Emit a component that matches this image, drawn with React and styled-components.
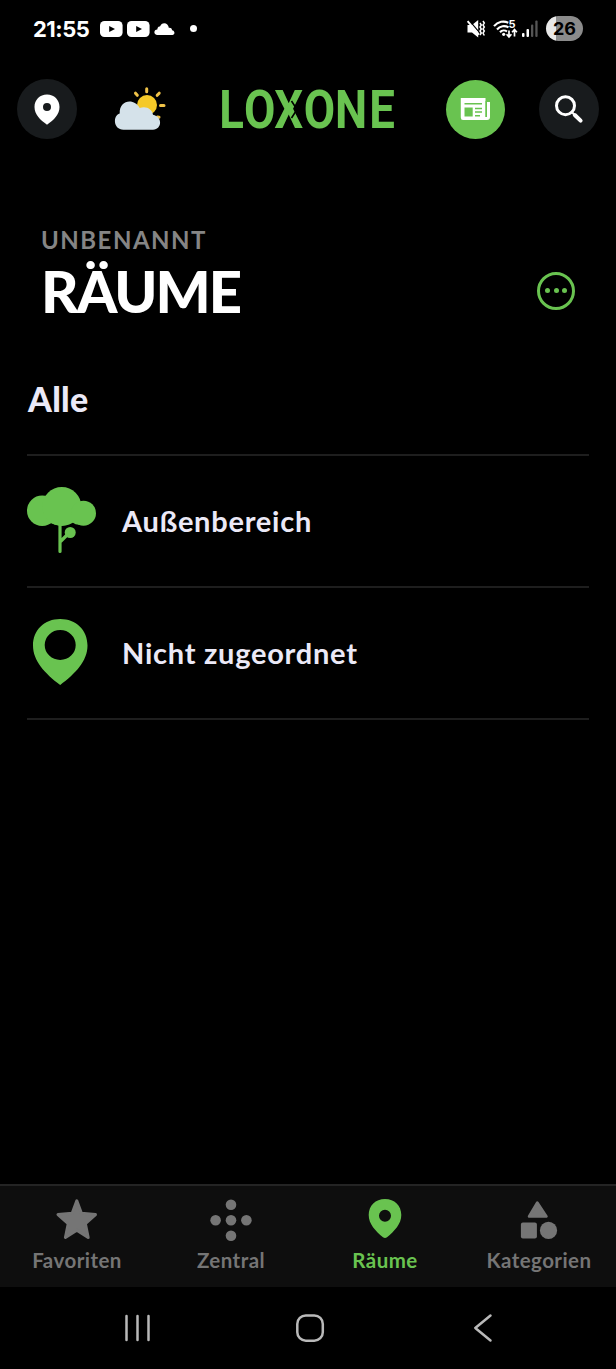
import styled, { createGlobalStyle } from 'styled-components';

const GREEN = '#69c350';
const GREY = '#757575';

function App() {
  return (
    <>
      <GlobalStyle />
      <Screen>
        <StatusBar />
        <Header />
        <PageHead>
          <Overline>UNBENANNT</Overline>
          <TitleRow>
            <Title>RÄUME</Title>
            <MoreButton aria-label="Mehr">
              <MoreDot />
              <MoreDot />
              <MoreDot />
            </MoreButton>
          </TitleRow>
        </PageHead>
        <Content>
          <SectionTitle>Alle</SectionTitle>
          <RoomList>
            <Room>
              <RoomIcon>
                <TreeIcon />
              </RoomIcon>
              <RoomName $spacing="0.75px">Außenbereich</RoomName>
            </Room>
            <Room>
              <RoomIcon>
                <RoomPinIcon />
              </RoomIcon>
              <RoomName $spacing="0.75px">Nicht zugeordnet</RoomName>
            </Room>
          </RoomList>
        </Content>
        <TabBar>
          <Tab>
            <StarIcon />
            <TabLabel>Favoriten</TabLabel>
          </Tab>
          <Tab>
            <DotsIcon />
            <TabLabel>Zentral</TabLabel>
          </Tab>
          <Tab $active>
            <TabPinIcon />
            <TabLabel>Räume</TabLabel>
          </Tab>
          <Tab>
            <ShapesIcon />
            <TabLabel>Kategorien</TabLabel>
          </Tab>
        </TabBar>
        <SystemNav />
      </Screen>
    </>
  );
}

function StatusBar() {
  return (
    <StatusWrapper>
      <Clock>21:55</Clock>
      <Notifications>
        <VideoIcon />
        <VideoIcon />
        <svg width="21" height="14" viewBox="0 0 21 14">
          <path
            d="M3.4 13C-.6 13-.6 7.600 3.300 7.600C3.400 4.600 5.500 4.500 6 4.600C7.500-.6 14.500.3 14.800 5.800C17.400 5.600 18 7 18 8.200C21.400 8.700 21 13 18.400 13Z"
            fill="#fff"
          />
        </svg>
        <NotificationDot />
      </Notifications>
      <Indicators>
        <MuteIcon />
        <WifiIcon />
        <SignalIcon />
        <Battery>26</Battery>
      </Indicators>
    </StatusWrapper>
  );
}

function VideoIcon() {
  return (
    <svg width="23" height="16" viewBox="0 0 23 16">
      <rect width="22.600" height="16" rx="4.500" fill="#fff" />
      <path d="M9.200 5L15 8L9.200 11Z" fill="#000" />
    </svg>
  );
}

function MuteIcon() {
  return (
    <svg width="20" height="20" viewBox="0 0 20 20">
      <path d="M1.500 6H6L12.200 1V18.500L6 13.500H1.500Z" fill="#fff" />
      <path d="M3.200 1.500L13.500 13.600" stroke="#000" strokeWidth="1.200" />
      <path d="M1.600 2.200L13 15.600" stroke="#fff" strokeWidth="1.900" />
      <path
        d="M14 4L15.300 6L14 8L15.300 10L14 12L15.300 14L14 16M17 2L18.300 4L17 6L18.300 8L17 10L18.300 12L17 14L18.300 16.500"
        stroke="#fff"
        strokeWidth="1.500"
        fill="none"
      />
    </svg>
  );
}

function WifiIcon() {
  return (
    <svg width="26" height="20" viewBox="0 0 26 20">
      <g fill="none" stroke="#fff" strokeWidth="2.100">
        <path d="M1 7.200C5 2.200 11 1.700 15.300 3.700" />
        <path d="M4 10.500C7 6.700 12 6.300 15.500 8.400" />
        <path d="M7 13.200C9 11 12 11 14 12.500" />
        <path d="M16 11.500V17.500M13.600 15.300L16 18L18.400 15.300" strokeWidth="1.700" />
        <path d="M21.500 17.500V11.500M19.100 13.200L21.500 10.500L23.900 13.200" strokeWidth="1.700" />
      </g>
      <circle cx="10.700" cy="15.300" r="1.600" fill="#fff" />
      <IconDigit x="15.600" y="9.400">
        5
      </IconDigit>
    </svg>
  );
}

function SignalIcon() {
  return (
    <svg width="17" height="18" viewBox="0 0 17 18">
      <rect x="0" y="13" width="2.500" height="4" rx="1" fill="#fff" />
      <rect x="4.500" y="9" width="2.500" height="8" rx="1" fill="#fff" />
      <rect x="9" y="4.500" width="2.300" height="12.500" rx="1" fill="#555" />
      <rect x="13.300" y="0.500" width="2.300" height="16.500" rx="1" fill="#555" />
    </svg>
  );
}

function Header() {
  return (
    <HeaderWrapper>
      <RoundButton $size={60} aria-label="Standort">
        <svg width="26" height="31" viewBox="0 0 26 31">
          <path
            fillRule="evenodd"
            d="M13 .5C20.200.5 25.500 5.900 25.500 12.900C25.500 20.500 20 25.500 13 30.700C6 25.500.5 20.500.5 12.900C.5 5.900 5.800.5 13 .5ZM13 9A4 4 0 1 0 13 17A4 4 0 1 0 13 9Z"
            fill="#fff"
          />
        </svg>
      </RoundButton>
      <WeatherIcon />
      <Logo />
      <RoundButton $size={59} $color={GREEN} aria-label="News">
        <NewsIcon />
      </RoundButton>
      <RoundButton $size={60} aria-label="Suche">
        <svg width="30" height="30" viewBox="0 0 30 30">
          <circle cx="11.500" cy="11.700" r="9" fill="none" stroke="#fff" strokeWidth="3" />
          <path d="M18 18.200L20 20.200" stroke="#fff" strokeWidth="2" />
          <path d="M20.800 21L26.600 26.600" stroke="#fff" strokeWidth="4" strokeLinecap="round" />
        </svg>
      </RoundButton>
    </HeaderWrapper>
  );
}

function WeatherIcon() {
  return (
    <svg width="52" height="46" viewBox="0 0 52 46">
      <circle cx="32" cy="19" r="10" fill="#f5c928" />
      <path
        d="M31.700 2.700V5.800M20.500 7.200L22.300 9.300M44.200 7.200L42.200 9.300M45.500 19.600H49M42.500 31L44 31.300"
        stroke="#efc248"
        strokeWidth="3"
        strokeLinecap="round"
      />
      <path
        d="M8.500 43.800C-2 43.500-2.300 29.300 4.700 27.500C4 13.500 19.500 11.700 24.700 22C31.500 19.500 37.300 23.500 38 28.700C47.500 30.500 47.500 43 38 43.800Z"
        fill="#d5e2ea"
      />
    </svg>
  );
}

function Logo() {
  return (
    <svg width="176" height="66" viewBox="0 -12 176 66" role="img" aria-label="Loxone">
      <g transform="scale(.86 1)">
        <LogoText x="-.8 27.800 63.200 97.500 133.800 173.500" y="40">
          LOXONE
        </LogoText>
      </g>
      <path d="M71.500 13L77 21.500L71.500 30" stroke="#000" strokeWidth="1.600" fill="none" />
    </svg>
  );
}

function NewsIcon() {
  return (
    <svg width="31" height="24" viewBox="0 0 31 24">
      <path d="M.8 1H25.500V20H27V5H30V20Q30 23 27 23H3Q.8 23 .8 20.500Z" fill="#fff" />
      <path
        d="M4.500 6.700H22M15 11.500H22M15 15H22M15 18.700H20"
        stroke={GREEN}
        strokeWidth="1.600"
      />
      <path d="M4.500 10.500H12.700V19.500H4.500Z" fill={GREEN} />
      <path d="M26.200 4V20" stroke={GREEN} strokeWidth="1.400" />
    </svg>
  );
}

function TreeIcon() {
  return (
    <svg width="69" height="66" viewBox="0 0 69 66">
      <g fill={GREEN}>
        <circle cx="15.200" cy="23.700" r="15.200" />
        <circle cx="34.800" cy="19.500" r="19.500" />
        <circle cx="56.500" cy="26.200" r="12.500" />
        <path d="M15 28H57V37Q50 39 45.500 35.500Q34 41 23.500 36Z" />
        <circle cx="43.200" cy="45.500" r="5.500" />
      </g>
      <path
        d="M33 35V64.500M33.500 54.500L42 46"
        stroke={GREEN}
        strokeWidth="3.200"
        strokeLinecap="round"
      />
    </svg>
  );
}

function RoomPinIcon() {
  return (
    <svg width="69" height="66" viewBox="0 0 69 66">
      <path
        fillRule="evenodd"
        d="M33.200 0C49 0 60.500 11 60.500 26.500C60.500 42 48.500 54.500 33.200 66C18 54.500 6 42 6 26.500C6 11 17.500 0 33.200 0ZM33.200 11A15.500 15 0 1 0 33.200 41A15.500 15 0 1 0 33.200 11Z"
        fill={GREEN}
      />
    </svg>
  );
}

function StarIcon() {
  return (
    <svg width="44" height="44" viewBox="0 0 44 44">
      <path
        d="M21.800 2.800L26.400 15.300L40.500 16.600L30.400 25.700L33.200 39.500L21.800 32.200L10.400 39.500L13.200 25.700L3 16.600L17.200 15.300Z"
        fill="currentColor"
        stroke="currentColor"
        strokeWidth="3"
        strokeLinejoin="round"
      />
    </svg>
  );
}

function DotsIcon() {
  return (
    <svg width="44" height="44" viewBox="0 0 44 44" fill="currentColor">
      <circle cx="22" cy="6.700" r="5.300" />
      <circle cx="6.600" cy="22.200" r="5.300" />
      <circle cx="22" cy="22.200" r="5.300" />
      <circle cx="37.400" cy="22.200" r="5.300" />
      <circle cx="22" cy="37.700" r="5.300" />
    </svg>
  );
}

function TabPinIcon() {
  return (
    <svg width="44" height="44" viewBox="0 0 44 44">
      <path
        fillRule="evenodd"
        d="M22 1C31.500 1 38.300 7.700 38.300 17C38.300 26 31.500 33 24 39.300Q22 40.800 20 39.300C12.500 33 5.700 26 5.700 17C5.700 7.700 12.500 1 22 1ZM22 11.800A6 6 0 1 0 22 23.800A6 6 0 1 0 22 11.800Z"
        fill="currentColor"
      />
    </svg>
  );
}

function ShapesIcon() {
  return (
    <svg width="44" height="44" viewBox="0 0 44 44" fill="currentColor">
      <path
        d="M20.300 4.500L29.500 18.500H12Z"
        stroke="currentColor"
        strokeWidth="2.500"
        strokeLinejoin="round"
      />
      <rect x="3.900" y="24.600" width="16" height="16" rx="2" />
      <circle cx="31.500" cy="32.400" r="8.600" />
    </svg>
  );
}

function SystemNav() {
  return (
    <NavWrapper>
      <NavButton aria-label="Zuletzt">
        <svg width="30" height="30" viewBox="0 0 30 30">
          <path d="M4.500 3V27M15.500 3V27M26.500 3V27" />
        </svg>
      </NavButton>
      <NavButton aria-label="Home">
        <svg width="30" height="30" viewBox="0 0 30 30">
          <rect x="2.300" y="2.500" width="25.500" height="25.200" rx="8.500" />
        </svg>
      </NavButton>
      <NavButton aria-label="Zurück">
        <svg width="30" height="30" viewBox="0 0 30 30">
          <path d="M22.500 2.500L7.300 15L22.500 27.500" />
        </svg>
      </NavButton>
    </NavWrapper>
  );
}

const GlobalStyle = createGlobalStyle`
  body {
    margin: 0;
    background: #000;
    font-family: Lato, "Liberation Sans", sans-serif;
  }
  svg {
    display: block;
    flex-shrink: 0;
    overflow: visible;
  }
  button {
    padding: 0;
    border: 0;
    background: none;
  }
`;

const Screen = styled.div`
  display: flex;
  flex-direction: column;
  width: 616px;
  height: 1369px;
  overflow: hidden;
  background: #000;
`;

const StatusWrapper = styled.div`
  display: flex;
  align-items: center;
  box-sizing: border-box;
  height: 57px;
  padding: 0 33px;
`;

const Clock = styled.div`
  width: 67px;
  font: 700 22px/26px Inter, sans-serif;
  letter-spacing: -0.5px;
  color: #fff;
`;

const Notifications = styled.div`
  display: flex;
  align-items: center;
  gap: 4px;
  flex: 1;
`;

const NotificationDot = styled.div`
  width: 7px;
  height: 7px;
  margin-left: 11px;
  border-radius: 50%;
  background: #fff;
`;

const Indicators = styled.div`
  display: flex;
  align-items: center;
  gap: 7px;
  svg + svg + svg {
    margin-left: -4px;
  }
`;

const IconDigit = styled.text`
  font: 700 11px Inter, sans-serif;
  fill: #fff;
`;

const Battery = styled.div`
  width: 37px;
  height: 25px;
  border-radius: 13px;
  background: linear-gradient(90deg, #e8e8e8 10px, #8b8b8b 10px);
  font: 700 18px/25px Inter, sans-serif;
  text-align: center;
  color: #000;
`;

const HeaderWrapper = styled.div`
  display: grid;
  grid-template-columns: 98px 105px 226px 93px 60px;
  align-items: center;
  height: 104px;
  padding-left: 17px;
`;

const RoundButton = styled.button`
  display: flex;
  align-items: center;
  justify-content: center;
  width: ${(props) => props.$size}px;
  height: ${(props) => props.$size}px;
  border-radius: 50%;
  background: ${(props) => props.$color || '#181b1d'};
`;

const LogoText = styled.text`
  font: 700 53px Roboto, sans-serif;
  fill: ${GREEN};
`;

const PageHead = styled.div`
  padding: 65px 41px 0;
`;

const Overline = styled.div`
  font-size: 24px;
  font-weight: 700;
  line-height: 28px;
  letter-spacing: 1.5px;
  color: #858585;
`;

const TitleRow = styled.div`
  display: flex;
  align-items: center;
  justify-content: space-between;
  margin-top: 3px;
`;

const Title = styled.h1`
  margin: 0;
  font-size: 58px;
  font-weight: 900;
  line-height: 67px;
  letter-spacing: -2px;
  color: #fff;
`;

const MoreButton = styled.button`
  display: flex;
  align-items: center;
  justify-content: center;
  gap: 3.5px;
  box-sizing: border-box;
  width: 38px;
  height: 38px;
  border: 3px solid ${GREEN};
  border-radius: 50%;
`;

const MoreDot = styled.span`
  width: 5px;
  height: 5px;
  border-radius: 50%;
  background: ${GREEN};
`;

const Content = styled.main`
  flex: 1;
  padding: 55px 27px 0;
`;

const SectionTitle = styled.h2`
  margin: 0 0 35px;
  padding-left: 1px;
  font-size: 34px;
  font-weight: 900;
  line-height: 40px;
  letter-spacing: 0.3px;
  color: #ebe9f7;
`;

const RoomList = styled.div`
  border-bottom: 2px solid #1e1e1e;
`;

const Room = styled.div`
  display: flex;
  align-items: center;
  gap: 26px;
  box-sizing: border-box;
  height: 132px;
  border-top: 2px solid #1e1e1e;
`;

const RoomIcon = styled.div`
  margin-bottom: 2px;
`;

const RoomName = styled.div`
  font-size: 29px;
  font-weight: 700;
  line-height: 36px;
  letter-spacing: ${(props) => props.$spacing};
  color: #ebe9f7;
`;

const TabBar = styled.nav`
  display: flex;
  box-sizing: border-box;
  height: 103px;
  border-top: 2px solid #242424;
  background: #0e0e0e;
`;

const Tab = styled.div`
  display: flex;
  flex-direction: column;
  align-items: center;
  flex: 1;
  padding-top: 12px;
  color: ${(props) => (props.$active ? GREEN : GREY)};
`;

const TabLabel = styled.div`
  margin-top: 5px;
  font-size: 20.5px;
  font-weight: 700;
  line-height: 26px;
  letter-spacing: 0.45px;
`;

const NavWrapper = styled.div`
  display: flex;
  align-items: center;
  justify-content: space-between;
  box-sizing: border-box;
  height: 82px;
  padding: 0 118px 1px 122px;
`;

const NavButton = styled.button`
  svg {
    fill: none;
    stroke: #b9b9b9;
    stroke-width: 2.5;
    stroke-linecap: round;
    stroke-linejoin: round;
  }
`;

export default App;
